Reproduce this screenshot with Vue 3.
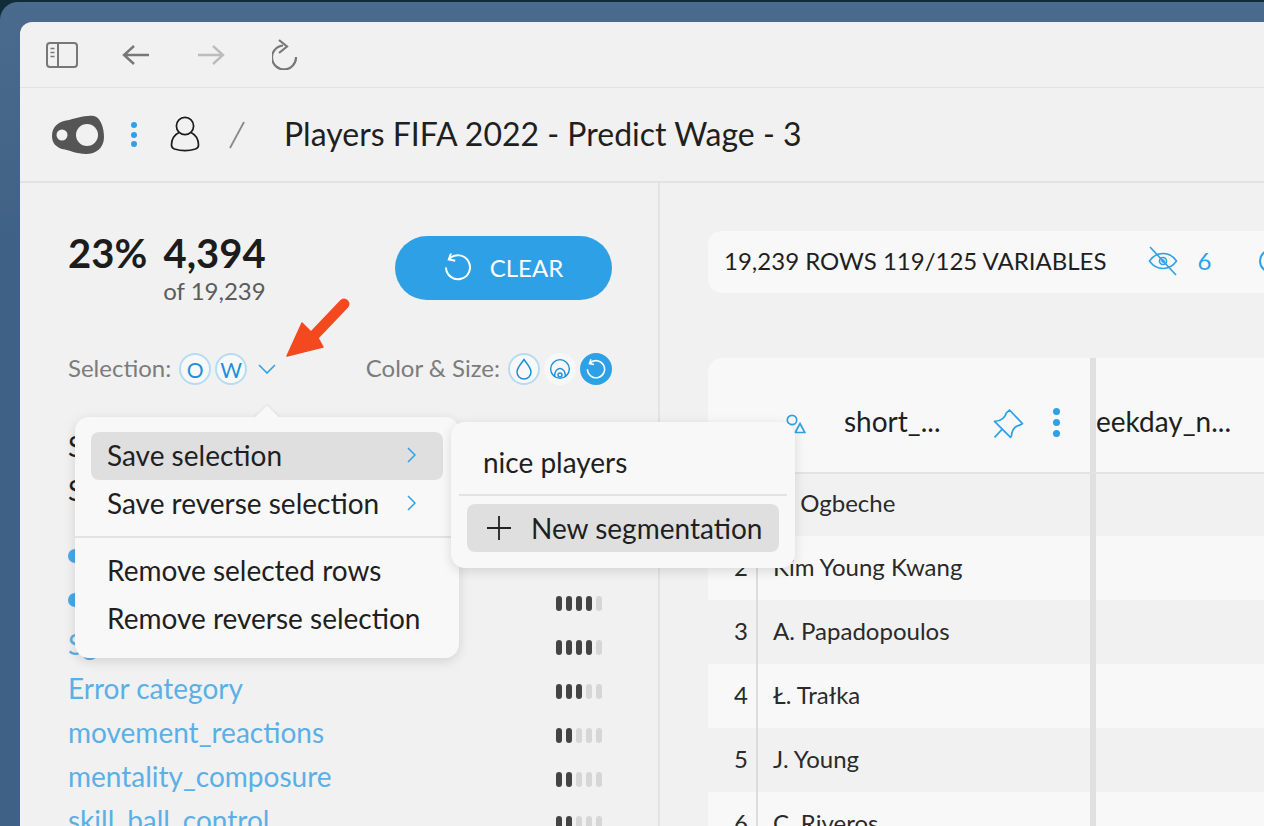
<script setup>
const variables = [
  { name: 'Error category', level: 3 },
  { name: 'movement_reactions', level: 2 },
  { name: 'mentality_composure', level: 2 },
  { name: 'skill_ball_control', level: 2 },
];

const players = ['B. Ogbeche', 'Kim Young Kwang', 'A. Papadopoulos', 'Ł. Trałka', 'J. Young', 'C. Riveros'];
</script>

<template>
  <div class="desktop">
    <div class="window">
      <div class="toolbar">
        <svg class="tool-sidebar" width="32" height="26" viewBox="0 0 32 26" fill="none" stroke="#777" stroke-width="2">
          <rect x="1" y="1" width="30" height="24" rx="3" />
          <path d="M12 1v24" />
          <path d="M4.500 6.500h4M4.500 10.500h4M4.500 14.500h4" stroke-width="1.600" />
        </svg>
        <svg class="tool-back" width="28" height="22" viewBox="0 0 28 22" fill="none" stroke="#777" stroke-width="2.400">
          <path d="M27 11H2M12 2l-10 9 10 9" />
        </svg>
        <svg class="tool-forward" width="28" height="22" viewBox="0 0 28 22" fill="none" stroke="#bcbcbc" stroke-width="2.400">
          <path d="M1 11h25M16 2l10 9-10 9" />
        </svg>
        <svg class="tool-reload" width="26" height="31" viewBox="0 0 26 31" fill="none" stroke="#777" stroke-width="2.200">
          <path d="M11 6.500A12 12 0 1 0 24 18" />
          <path d="M7 1l8 6.500-8 6.500" />
        </svg>
      </div>

      <div class="header">
        <svg class="logo" width="52" height="39" viewBox="52 114 52 39">
          <path d="M52 135C52 126 58 121 66 119.500C76 117.500 86 113.500 94 115C101 117 104 127 104 136C104 147 96 153 86 153C76 153 70 149 62 148C56 146 52 142 52 135Z" fill="#555" />
          <circle cx="62" cy="134" r="5.500" fill="#f1f1f1" />
          <circle cx="87" cy="134" r="11" fill="#f1f1f1" />
        </svg>
        <div class="vdots"><i></i><i></i><i></i></div>
        <svg class="user" width="30" height="36" viewBox="0 0 30 36" fill="none" stroke="#1c1c1c" stroke-width="1.700">
          <circle cx="15" cy="10" r="8.600" />
          <path d="M9 16.500C4 19 1.500 23.500 1.500 29c0 2 1 3.300 3 4C11 35 19 35 25.500 33c2-.7 3-2 3-4 0-5.500-2.500-10-7.500-12.500" />
        </svg>
        <svg class="slash" width="18" height="28" viewBox="0 0 18 28" fill="none" stroke="#8a8a8a" stroke-width="1.800">
          <path d="M16 1L2 27" />
        </svg>
        <h1 class="title">Players FIFA 2022 - Predict Wage - 3</h1>
      </div>

      <div class="main">
        <aside class="side">
          <div class="summary">
            <div class="counts">
              <span class="percent">23%</span>
              <div class="count">
                <strong>4,394</strong>
                <span>of 19,239</span>
              </div>
            </div>
            <button class="clear">
              <svg width="28" height="28" viewBox="0 0 28 28" fill="none" stroke="#fff" stroke-width="2">
                <path d="M5.500 5.800A12 12 0 1 1 2 14.500" />
                <path d="M7 0.500L4.800 6.500l6.400 1.300" />
              </svg>
              CLEAR
            </button>
          </div>

          <div class="filters">
            <div class="filter-group">
              <span class="label">Selection:</span>
              <span class="chip ring">O</span>
              <span class="chip ring">W</span>
              <svg class="chev" width="18" height="10" viewBox="0 0 18 10" fill="none" stroke="#2ea1e6" stroke-width="1.600">
                <path d="M1 1l8 8 8-8" />
              </svg>
            </div>
            <div class="filter-group">
              <span class="label">Color &amp; Size:</span>
              <span class="chip ring">
                <svg width="18" height="22" viewBox="0 0 18 22" fill="none" stroke="#1f8fd8" stroke-width="1.500">
                  <path d="M9 1.500C6 6 2 9.500 2 14a7 7 0 0 0 14 0C16 9.500 12 6 9 1.500Z" />
                </svg>
              </span>
              <span class="chip plain">
                <svg width="22" height="22" viewBox="0 0 20 20" fill="none" stroke="#1f8fd8" stroke-width="1.300">
                  <circle cx="10" cy="10" r="8.500" />
                  <path d="M5 17c0-4.500 2.200-7.500 5-7.500s5 3 5 7.500" />
                  <circle cx="10" cy="15.500" r="1.800" />
                </svg>
              </span>
              <span class="chip solid">
                <svg width="20" height="20" viewBox="0 0 28 28" fill="none" stroke="#fff" stroke-width="2.200">
                  <path d="M5.500 5.800A12 12 0 1 1 2 14.500" />
                  <path d="M7 0.500L4.800 6.500l6.400 1.300" />
                </svg>
              </span>
            </div>
          </div>

          <div class="var-list">
            <div class="var-row dark">Sort</div>
            <div class="var-row dark">Sh</div>
            <div class="var-row spaced"><span class="dot"></span></div>
            <div class="var-row">
              <span class="dot"></span>
              <span class="bars"><i class="on"></i><i class="on"></i><i class="on"></i><i class="on"></i><i></i></span>
            </div>
            <div class="var-row">
              <span class="var-name">Sg</span>
              <span class="bars"><i class="on"></i><i class="on"></i><i class="on"></i><i class="on"></i><i></i></span>
            </div>
            <div v-for="v in variables" :key="v.name" class="var-row">
              <span class="var-name">{{ v.name }}</span>
              <span class="bars"><i v-for="n in 5" :key="n" :class="{ on: n <= v.level }"></i></span>
            </div>
          </div>

          <svg class="arrow" width="72" height="68" viewBox="282 295 72 68">
            <path d="M287 356L302 323L311 332L341 300.500Q344.500 298 347.500 301Q350 304 347.500 307L318 338L323 347Z" fill="#f4491f" stroke="#f4491f" stroke-width="1.500" stroke-linejoin="round" />
          </svg>

          <div class="menu">
            <span class="caret"></span>
            <div class="menu-item active">Save selection
              <svg width="9" height="16" viewBox="0 0 9 16" fill="none" stroke="#2ea1e6" stroke-width="1.500"><path d="M1 1l7 7-7 7" /></svg>
            </div>
            <div class="menu-item">Save reverse selection
              <svg width="9" height="16" viewBox="0 0 9 16" fill="none" stroke="#2ea1e6" stroke-width="1.500"><path d="M1 1l7 7-7 7" /></svg>
            </div>
            <hr class="menu-line" />
            <div class="menu-item">Remove selected rows</div>
            <div class="menu-item">Remove reverse selection</div>
          </div>

          <div class="submenu">
            <div class="sub-item">nice players</div>
            <hr class="sub-line" />
            <div class="sub-item active">
              <svg width="24" height="24" viewBox="0 0 24 24" fill="none" stroke="#222" stroke-width="1.800"><path d="M12 0v24M0 12h24" /></svg>
              New segmentation
            </div>
          </div>
        </aside>

        <section class="content">
          <div class="stats">
            <span class="stats-text">19,239 ROWS 119/125 VARIABLES</span>
            <svg class="eye" width="30" height="30" viewBox="0 0 30 30" fill="none" stroke="#2ea1e6" stroke-width="1.600">
              <path d="M1.500 15C5 10 9.500 7.500 15 7.500S25 10 28.500 15C25 20 20.500 22.500 15 22.500S5 20 1.500 15Z" />
              <circle cx="15" cy="15" r="3.500" />
              <circle cx="15" cy="15" r="1" fill="#2ea1e6" />
              <path d="M2 1l26 28" />
            </svg>
            <span class="hidden-count">6</span>
            <span class="next-icon"></span>
          </div>

          <div class="table">
            <div class="table-head">
              <div class="head-cell">
                <svg class="shapes" width="20" height="20" viewBox="0 0 20 20" fill="none" stroke="#2ea1e6" stroke-width="1.700">
                  <circle cx="6" cy="6" r="4.700" />
                  <path d="M14 9.500l4.800 9h-9.600Z" />
                </svg>
                <span class="head-name">short_...</span>
                <svg class="pin" width="31" height="30" viewBox="24 22 90 88" fill="none" stroke="#2ea1e6" stroke-width="5" stroke-linejoin="round">
                  <path d="M28 58Q42 58 52 50Q62 42 62 34L72 25L110 65L100 70Q88 72 82 84Q78 92 78 100L75 105Z" />
                  <path d="M50 82L28 105" />
                </svg>
                <div class="vdots head-dots"><i></i><i></i><i></i></div>
              </div>
              <div class="head-next">eekday_n...</div>
            </div>
            <div v-for="(p, i) in players" :key="p" class="table-row" :class="{ odd: i % 2 === 0, first: i === 0 }">
              <span class="row-num">{{ i + 1 }}</span>
              <span class="row-name">{{ p }}</span>
            </div>
          </div>
        </section>
      </div>
    </div>
  </div>
</template>

<style>
html, body {
  margin: 0;
  height: 826px;
  overflow: hidden;
  background: #0f2c38;
}
</style>

<style scoped>
.desktop {
  height: 824px;
  margin-top: 2px;
  padding: 20px 0 0 20px;
  box-sizing: border-box;
  border-radius: 18px 0 0 0;
  background: linear-gradient(180deg, #4a6b8d 0%, #3f6185 30%);
  font-family: Lato, "Open Sans", sans-serif;
  color: #1f1f1f;
  overflow: hidden;
}
.window {
  height: 804px;
  background: #f1f1f1;
  border-radius: 12px 0 0 0;
  display: flex;
  flex-direction: column;
}
.toolbar {
  height: 65px;
  flex: none;
  display: flex;
  align-items: center;
  padding-left: 26px;
  border-bottom: 1px solid #e3e3e3;
}
.tool-back { margin-left: 44px; }
.tool-forward { margin-left: 47px; }
.tool-reload { margin-left: 47px; }

.header {
  height: 95px;
  box-sizing: border-box;
  flex: none;
  display: flex;
  align-items: center;
  padding-left: 32px;
  border-bottom: 2px solid #e3e3e3;
}
.vdots {
  display: flex;
  flex-direction: column;
  gap: 3.500px;
}
.vdots i {
  width: 6px;
  height: 6px;
  border-radius: 50%;
  background: #2ea1e6;
}
.header .vdots { margin-left: 27px; }
.user { margin-left: 33px; margin-top: -2px; }
.slash { margin-left: 28px; }
.title {
  margin: -2px 0 0 38px;
  font-size: 32px;
  font-weight: 400;
  color: #1f1f1f;
}

.main {
  flex: 1;
  display: flex;
  min-height: 0;
}
.side {
  position: relative;
  width: 640px;
  flex: none;
  box-sizing: border-box;
  padding: 53px 46px 0 48px;
  border-right: 2px solid #e3e3e3;
}
.summary {
  display: flex;
  justify-content: space-between;
  align-items: flex-start;
}
.counts {
  display: flex;
  gap: 16px;
  align-items: flex-start;
  margin-top: -2px;
}
.percent, .count strong {
  font-size: 40px;
  font-weight: 700;
  line-height: 38px;
  color: #1c1c1c;
}
.count {
  display: flex;
  flex-direction: column;
  align-items: flex-end;
}
.count span {
  margin-top: 5px;
  font-size: 24px;
  line-height: 28px;
  color: #5c5c5c;
}
.clear {
  width: 217px;
  height: 64px;
  border: none;
  border-radius: 32px;
  background: #2ea1e6;
  color: #fff;
  font: 400 24px Lato, sans-serif;
  display: flex;
  align-items: center;
  justify-content: center;
  gap: 18px;
  padding: 0 0 2px;
}
.filters {
  display: flex;
  justify-content: space-between;
  margin-top: 48px;
}
.filter-group {
  display: flex;
  align-items: center;
  gap: 4px;
  height: 32px;
}
.label {
  font-size: 24px;
  color: #7c7c7c;
  margin: -4px 4px 0 0;
}
.chip {
  width: 32px;
  height: 32px;
  box-sizing: border-box;
  border-radius: 50%;
  display: flex;
  align-items: center;
  justify-content: center;
  color: #1f8fd8;
  font-size: 21px;
}
.chip.ring {
  background: #f8f8f8;
  border: 2px solid #b5dcf5;
}
.chip.plain { background: #f8f8f8; }
.chip.solid { background: #2ea1e6; }
.chev { margin-left: 7px; }

.var-list {
  margin-top: 39px;
  margin-right: 10px;
}
.var-row {
  height: 44px;
  display: flex;
  align-items: center;
  justify-content: space-between;
  font-size: 28px;
}
.var-row.spaced { margin-top: 22px; }
.var-row.dark { color: #1f1f1f; }
.var-name { color: #5ab0e6; }
.dot {
  width: 14px;
  height: 14px;
  border-radius: 50%;
  background: #4aa8e8;
}
.bars {
  display: flex;
  gap: 4px;
  margin-top: 6px;
}
.bars i {
  width: 6px;
  height: 15px;
  border-radius: 3px;
  background: #d6d6d6;
}
.bars i.on { background: #444; }

.arrow {
  position: absolute;
  left: 262px;
  top: 112px;
}

.menu {
  position: absolute;
  left: 55px;
  top: 234px;
  width: 384px;
  height: 241px;
  box-sizing: border-box;
  padding: 15px 16px;
  background: #f8f8f8;
  border-radius: 14px;
  box-shadow: 0 3px 12px rgba(0, 0, 0, 0.13);
  z-index: 2;
}
.caret {
  position: absolute;
  left: 183px;
  top: -8px;
  width: 18px;
  height: 18px;
  background: #f8f8f8;
  transform: rotate(45deg);
  box-shadow: -1px -1px 2px rgba(0, 0, 0, 0.06);
}
.menu-item {
  position: relative;
  height: 48px;
  box-sizing: border-box;
  display: flex;
  align-items: center;
  justify-content: space-between;
  padding: 0 27px 2px 16px;
  border-radius: 8px;
  font-size: 28px;
  color: #1f1f1f;
  white-space: nowrap;
}
.menu-item.active { background: #dfdfdf; }
.menu-line {
  margin: 8px -16px 9px;
  border: none;
  height: 2px;
  background: #e3e3e3;
}

.submenu {
  position: absolute;
  left: 431px;
  top: 239px;
  width: 344px;
  height: 146px;
  box-sizing: border-box;
  padding: 16px;
  background: #f8f8f8;
  border-radius: 14px;
  box-shadow: 0 3px 12px rgba(0, 0, 0, 0.13);
  z-index: 3;
}
.sub-item {
  height: 50px;
  box-sizing: border-box;
  display: flex;
  align-items: center;
  padding: 0 0 2px 16px;
  font-size: 28px;
  color: #1f1f1f;
}
.sub-item.active {
  height: 48px;
  background: #dfdfdf;
  border-radius: 8px;
  gap: 20px;
  padding: 0 0 0 20px;
}
.sub-line {
  margin: 6px -8px 8px;
  border: none;
  height: 2px;
  background: #e3e3e3;
}

.content {
  flex: 1;
  min-width: 0;
  padding: 48px 0 0 48px;
}
.stats {
  height: 62px;
  box-sizing: border-box;
  display: flex;
  align-items: center;
  background: #f8f8f8;
  border-radius: 14px 0 0 14px;
  padding: 0 0 3px 16px;
  font-size: 24px;
  color: #1f1f1f;
  overflow: hidden;
}
.stats-text {
  white-space: nowrap;
  flex: none;
}
.eye {
  margin-left: 42px;
  flex: none;
}
.hidden-count {
  margin-left: 19px;
  color: #2ea1e6;
}
.next-icon {
  width: 24px;
  height: 24px;
  margin-left: 48px;
  flex: none;
  box-sizing: border-box;
  border: 2px solid #2ea1e6;
  border-radius: 50%;
}

.table {
  margin-top: 65px;
  background: #f8f8f8;
  border-radius: 14px 0 0 0;
  overflow: hidden;
}
.table-head {
  height: 116px;
  box-sizing: border-box;
  display: flex;
  border-bottom: 2px solid #e3e3e3;
}
.head-cell {
  width: 388px;
  flex: none;
  box-sizing: border-box;
  display: flex;
  align-items: center;
  padding: 12px 0 0 78px;
  border-right: 6px solid #e0e0e0;
}
.shapes { margin-top: 5px; }
.pin { margin-top: 5px; }
.head-name {
  margin-left: 38px;
  width: 149px;
  font-size: 28px;
}
.head-dots {
  margin: 3px 0 0 29px;
  gap: 4px;
}
.head-dots i {
  width: 7px;
  height: 7px;
}
.head-next {
  display: flex;
  align-items: center;
  padding-top: 12px;
  font-size: 28px;
}
.table-row {
  height: 64px;
  box-sizing: border-box;
  display: flex;
  align-items: center;
  padding-bottom: 4px;
  font-size: 24px;
  background: #f8f8f8;
  color: #2a2a2a;
  position: relative;
}
.table-row.odd { background: #f1f1f1; }
.table-row.first {
  height: 62px;
  padding-bottom: 5px;
}
.table-row::after {
  content: "";
  position: absolute;
  left: 382px;
  top: 0;
  bottom: 0;
  width: 6px;
  background: #e0e0e0;
}
.row-num {
  width: 50px;
  height: 100%;
  box-sizing: border-box;
  display: flex;
  align-items: center;
  justify-content: flex-end;
  padding-right: 10px;
  flex: none;
}
.table-row::before {
  content: "";
  position: absolute;
  left: 48px;
  top: 0;
  bottom: 0;
  width: 2px;
  background: #dcdcdc;
}
.row-name { margin-left: 15px; }
</style>
